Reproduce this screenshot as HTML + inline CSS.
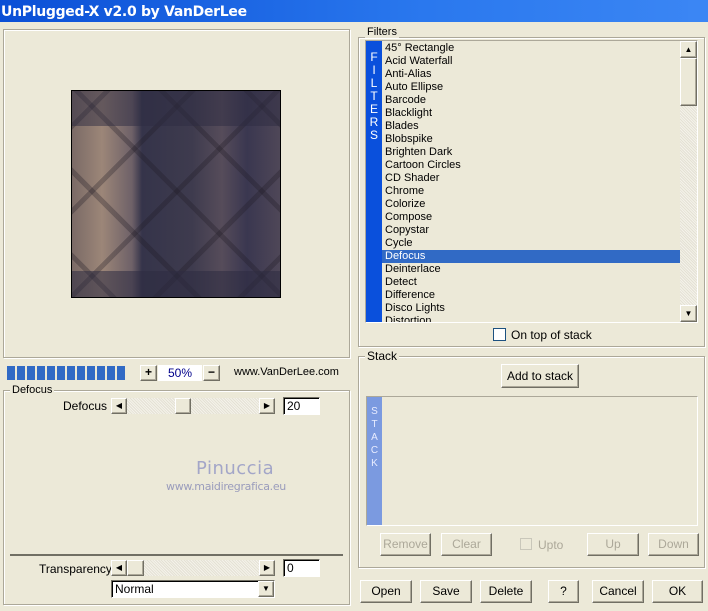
<!DOCTYPE html>
<html><head><meta charset="utf-8"><style>
*{margin:0;padding:0;box-sizing:border-box}
body{width:708px;height:611px;background:#ece9d8;font-family:"Liberation Sans",Tahoma,sans-serif;font-size:11px;color:#000;position:relative;overflow:hidden}
.a{position:absolute}
.grp{position:absolute;border:1px solid #aca899;box-shadow:inset 1px 1px 0 #fff,1px 1px 0 #fff}
.lg{position:absolute;background:#ece9d8;padding:0 2px;font-size:11px;line-height:12px}
.btn{position:absolute;background:#ece9d8;border:1px solid;border-color:#fff #716f64 #716f64 #fff;box-shadow:inset -1px -1px 0 #aca899;text-align:center;font-size:12px}
.dis{color:#aca899}
.edit{position:absolute;background:#fff;border:1px solid;border-color:#716f64 #fff #fff #716f64;box-shadow:inset 1px 1px 0 #000;font-size:12px;padding-left:3px}
.track{position:absolute;background:repeating-linear-gradient(45deg,#f4f2ea 0 1px,#e4e1d4 1px 2px)}
.it{position:absolute;left:385px;font-size:11px;line-height:13px;height:13px;white-space:nowrap}
</style></head><body>
<div class="a" style="left:0;top:0;width:708px;height:22px;background:linear-gradient(90deg,#0a4fd6,#2a78ee 60%,#3b86f4);"></div>
<div class="a" style="left:1px;top:2px;color:#fff;font-weight:bold;font-size:14px;line-height:20px;font-family:'DejaVu Sans',sans-serif;letter-spacing:-0.3px">UnPlugged-X v2.0 by VanDerLee</div>
<div class="a" style="left:688px;top:0;width:20px;height:22px;background:#3b86f4"></div>

<!-- preview -->
<div class="grp" style="left:3px;top:29px;width:347px;height:329px"></div>
<div class="a" style="left:71px;top:90px;width:210px;height:208px;border:1px solid #000;overflow:hidden;background:#4a4452">
 <div class="a" style="left:0;top:0;width:210px;height:208px;background:linear-gradient(90deg,#7a6a66 0,#9c8678 30px,#6e6168 60px,#35344a 70px,#3e3b4e 120px,#564c5a 150px,#3a3750 175px,#504858 210px)"></div>
 <div class="a" style="left:0;top:0;width:210px;height:208px;background:repeating-linear-gradient(45deg,rgba(0,0,0,0) 0 28px,rgba(30,25,35,.3) 28px 33px,rgba(0,0,0,0) 33px 60px),repeating-linear-gradient(-45deg,rgba(0,0,0,0) 0 28px,rgba(30,25,35,.3) 28px 33px,rgba(0,0,0,0) 33px 60px)"></div>
 <div class="a" style="left:0;top:0;width:210px;height:35px;background:rgba(45,43,65,.5)"></div>
 <div class="a" style="left:0;top:180px;width:210px;height:28px;background:rgba(45,43,65,.55)"></div>
</div>

<div class="a" style="left:7px;top:366px;width:118px;height:14px;background:repeating-linear-gradient(90deg,#316ac5 0 8px,#ece9d8 8px 10px)"></div>
<div class="btn" style="left:140px;top:365px;width:17px;height:16px;line-height:13px;font-weight:bold">+</div>
<div class="a" style="left:158px;top:365px;width:44px;height:16px;background:#fff;color:#00008b;text-align:center;font-size:12px;line-height:16px">50%</div>
<div class="btn" style="left:203px;top:365px;width:17px;height:16px;line-height:13px;font-weight:bold">−</div>
<div class="a" style="left:234px;top:365px;font-size:11px;line-height:14px">www.VanDerLee.com</div>

<div class="grp" style="left:3px;top:390px;width:347px;height:215px"></div>
<div class="lg" style="left:10px;top:384px">Defocus</div>
<div class="a" style="left:63px;top:399px;font-size:12px">Defocus</div>
<div class="track" style="left:127px;top:398px;width:132px;height:16px"></div>
<div class="btn" style="left:111px;top:398px;width:16px;height:16px;font-size:8px;line-height:14px">◀</div>
<div class="btn" style="left:175px;top:398px;width:16px;height:16px"></div>
<div class="btn" style="left:259px;top:398px;width:16px;height:16px;font-size:8px;line-height:14px">▶</div>
<div class="edit" style="left:283px;top:397px;width:37px;height:18px;line-height:16px">20</div>

<div class="a" style="left:196px;top:458px;color:#a3a6c8;font-size:18px;font-family:'DejaVu Sans',sans-serif;letter-spacing:0.5px">Pinuccia</div>
<div class="a" style="left:166px;top:480px;color:#9a9cbc;font-size:11px;font-family:'DejaVu Sans',sans-serif;letter-spacing:-0.3px">www.maidiregrafica.eu</div>

<div class="a" style="left:10px;top:554px;width:333px;height:2px;background:#716f64"></div>
<div class="a" style="left:39px;top:562px;font-size:12px">Transparency</div>
<div class="track" style="left:127px;top:560px;width:132px;height:16px"></div>
<div class="btn" style="left:111px;top:560px;width:16px;height:16px;font-size:8px;line-height:14px">◀</div>
<div class="btn" style="left:127px;top:560px;width:17px;height:16px"></div>
<div class="btn" style="left:259px;top:560px;width:16px;height:16px;font-size:8px;line-height:14px">▶</div>
<div class="edit" style="left:283px;top:559px;width:37px;height:18px;line-height:16px">0</div>
<div class="edit" style="left:111px;top:580px;width:164px;height:18px;line-height:16px">Normal</div>
<div class="btn" style="left:258px;top:581px;width:16px;height:16px;font-size:8px;line-height:14px">▼</div>

<!-- filters -->
<div class="grp" style="left:358px;top:37px;width:347px;height:310px"></div>
<div class="lg" style="left:365px;top:26px">Filters</div>
<div class="a" style="left:365px;top:40px;width:333px;height:283px;border:1px solid;border-color:#aca899 #fff #fff #aca899"></div>
<div class="a" style="left:366px;top:41px;width:16px;height:281px;background:#0a50dc;color:#fff;font-size:12px;line-height:13px;text-align:center;padding-top:10px">F<br>I<br>L<br>T<br>E<br>R<br>S</div>
<div class="a" style="left:382px;top:250px;width:298px;height:13px;background:#316ac5"></div>
<div class="a" style="left:366px;top:41px;width:314px;height:281px;overflow:hidden">
<div style="position:relative;left:-366px;top:-41px">
<div class="it" style="top:42px">45° Rectangle</div>
<div class="it" style="top:55px">Acid Waterfall</div>
<div class="it" style="top:68px">Anti-Alias</div>
<div class="it" style="top:81px">Auto Ellipse</div>
<div class="it" style="top:94px">Barcode</div>
<div class="it" style="top:107px">Blacklight</div>
<div class="it" style="top:120px">Blades</div>
<div class="it" style="top:133px">Blobspike</div>
<div class="it" style="top:146px">Brighten Dark</div>
<div class="it" style="top:159px">Cartoon Circles</div>
<div class="it" style="top:172px">CD Shader</div>
<div class="it" style="top:185px">Chrome</div>
<div class="it" style="top:198px">Colorize</div>
<div class="it" style="top:211px">Compose</div>
<div class="it" style="top:224px">Copystar</div>
<div class="it" style="top:237px">Cycle</div>
<div class="it" style="top:250px;color:#fff">Defocus</div>
<div class="it" style="top:263px">Deinterlace</div>
<div class="it" style="top:276px">Detect</div>
<div class="it" style="top:289px">Difference</div>
<div class="it" style="top:302px">Disco Lights</div>
<div class="it" style="top:315px">Distortion</div>
</div></div>
<div class="track" style="left:680px;top:41px;width:17px;height:281px"></div>
<div class="btn" style="left:680px;top:41px;width:17px;height:17px;font-size:8px;line-height:15px">▲</div>
<div class="btn" style="left:680px;top:58px;width:17px;height:48px"></div>
<div class="btn" style="left:680px;top:305px;width:17px;height:17px;font-size:8px;line-height:15px">▼</div>
<div class="a" style="left:493px;top:328px;width:13px;height:13px;background:#fff;border:1px solid #1c5180"></div>
<div class="a" style="left:511px;top:328px;font-size:12px">On top of stack</div>

<!-- stack -->
<div class="grp" style="left:358px;top:356px;width:347px;height:212px"></div>
<div class="lg" style="left:365px;top:350px;font-size:12px">Stack</div>
<div class="btn" style="left:501px;top:364px;width:78px;height:24px;line-height:22px">Add to stack</div>
<div class="a" style="left:366px;top:396px;width:332px;height:130px;border:1px solid;border-color:#aca899 #fff #fff #aca899"></div>
<div class="a" style="left:367px;top:397px;width:15px;height:128px;background:#7b9ae0;color:#e8ecff;font-size:10px;line-height:13px;text-align:center;padding-top:8px">S<br>T<br>A<br>C<br>K</div>
<div class="btn dis" style="left:380px;top:533px;width:51px;height:23px;line-height:21px">Remove</div>
<div class="btn dis" style="left:441px;top:533px;width:51px;height:23px;line-height:21px">Clear</div>
<div class="a" style="left:520px;top:538px;width:12px;height:12px;border:1px solid #c9c7ba"></div>
<div class="a dis" style="left:538px;top:538px;font-size:12px">Upto</div>
<div class="btn dis" style="left:587px;top:533px;width:52px;height:23px;line-height:21px">Up</div>
<div class="btn dis" style="left:648px;top:533px;width:51px;height:23px;line-height:21px">Down</div>

<div class="btn" style="left:360px;top:580px;width:52px;height:23px;line-height:21px">Open</div>
<div class="btn" style="left:420px;top:580px;width:52px;height:23px;line-height:21px">Save</div>
<div class="btn" style="left:480px;top:580px;width:52px;height:23px;line-height:21px">Delete</div>
<div class="btn" style="left:548px;top:580px;width:31px;height:23px;line-height:21px">?</div>
<div class="btn" style="left:592px;top:580px;width:52px;height:23px;line-height:21px">Cancel</div>
<div class="btn" style="left:652px;top:580px;width:51px;height:23px;line-height:21px">OK</div>
</body></html>
